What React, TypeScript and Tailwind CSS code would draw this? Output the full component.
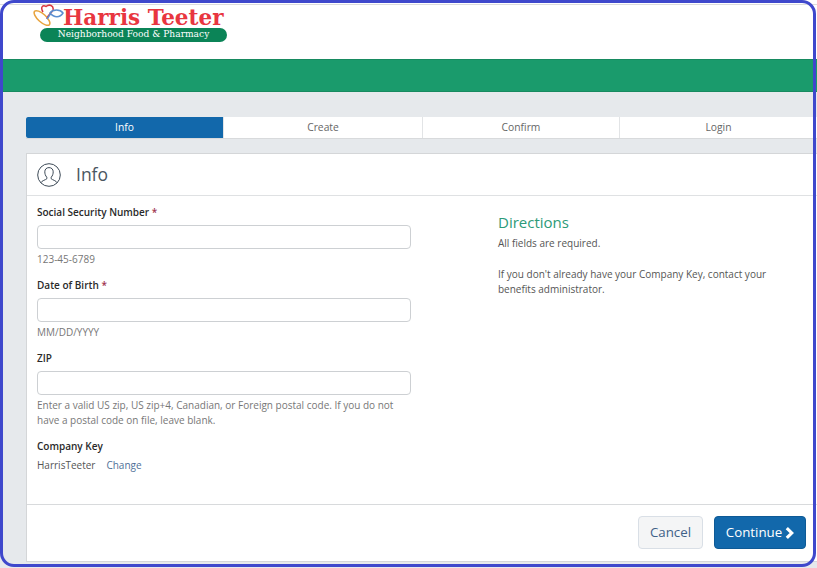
const Field = ({
  label,
  required,
  hint,
}: {
  label: string;
  required?: boolean;
  hint: string;
}) => (
  <div className="mb-[9px]">
    <div className="h-[19px] text-[10px] leading-[19px] font-semibold text-[#2a2a2a]">
      {label}
      {required && <span className="text-[#a0344f]"> *</span>}
    </div>
    <input
      type="text"
      className="mt-[3px] block h-[24px] w-[374px] rounded-[4px] border border-[#cdd0d3] bg-white"
    />
    <div className="mt-[3px] w-[374px] text-[10px] leading-[15px] text-[#777]">{hint}</div>
  </div>
);

const Logo = () => (
  <div className="relative ml-[32px] h-[59px] w-[200px]">
    <svg viewBox="0 0 34 24" className="absolute left-0 top-[4px] h-[24px] w-[34px]" fill="none">
      <ellipse cx="10" cy="14" rx="10" ry="4" transform="rotate(42 10 14)" stroke="#e8a33d" strokeWidth="1.500" />
      <path d="M11 8C8 3 11 0.500 14 2.500C17 0 22 1 21 6C20 9 16 10 15 15" stroke="#d9353f" strokeWidth="1.500" />
      <path d="M18 9C21 5 28 5 31 9C28 14 22 14 18 9ZM15 15L19 9" stroke="#5b8fd0" strokeWidth="1.500" />
    </svg>
    <div className="absolute left-[31px] top-[3px] whitespace-nowrap font-['DejaVu_Serif',serif] text-[21.500px] leading-[29px] font-bold text-[#e8363f]">
      Harris Teeter
    </div>
    <div className="absolute left-[8px] top-[28px] flex h-[14px] w-[187px] items-center justify-center rounded-[7px] bg-[#0b8457] font-['DejaVu_Serif',serif] text-[9.100px] whitespace-nowrap text-white">
      Neighborhood Food &amp; Pharmacy
    </div>
  </div>
);

const tabs = [
  { name: "Info", width: "w-[197px]", active: true },
  { name: "Create", width: "w-[199px]" },
  { name: "Confirm", width: "w-[197px]" },
  { name: "Login", width: "w-[198px]" },
];

export default function App() {
  return (
    <div className="relative h-[568px] w-[817px] overflow-hidden bg-white font-['Open_Sans',sans-serif]">
      <div className="flex h-full flex-col bg-[#e6e9ec] pl-[3px]">
        {/* Header */}
        <div className="relative -ml-[3px] h-[59px] shrink-0 bg-white">
          <div className="absolute top-[4px] right-0 left-0 border-t border-[#dcdcdc]" />
          <div className="relative">
            <Logo />
          </div>
        </div>
        <div className="-ml-[3px] h-[33px] shrink-0 border-y border-[#178a60] bg-[#1a9b6c]" />

        {/* Steps */}
        <div className="mt-[25px] ml-[23px] flex h-[22px] shrink-0 border-b border-[#d8dadc] bg-white">
          {tabs.map((tab) => (
            <div
              key={tab.name}
              className={
                tab.active
                  ? `${tab.width} flex shrink-0 items-center justify-center rounded-l-[2px] bg-[#1268ab] text-[10.300px] text-white`
                  : `${tab.width} flex shrink-0 items-center justify-center border-l border-[#e2e4e6] text-[10.300px] text-[#666]`
              }
            >
              {tab.name}
            </div>
          ))}
        </div>

        {/* Card */}
        <div className="mt-[14px] ml-[23px] flex h-[409px] shrink-0 flex-col border-t border-l border-b border-[#d4d6d8] bg-white">
          <div className="flex h-[42px] shrink-0 items-center border-b border-[#dfe1e3] pl-[10px]">
            <svg viewBox="0 0 24 24" className="h-[24px] w-[24px]" fill="none" stroke="#3d4a57" strokeWidth="1">
              <circle cx="12" cy="12" r="11.300" />
              <path d="M3.800 19.800C5 17.500 8.500 17 9.800 15.800V14.200C8.300 12.800 7.800 10.500 7.800 8.800C7.800 6.300 9.500 4.600 12 4.600C14.500 4.600 16.200 6.300 16.200 8.800C16.200 10.500 15.700 12.800 14.200 14.200V15.800C15.500 17 19 17.500 20.200 19.800" />
            </svg>
            <span className="ml-[15px] text-[17.500px] text-[#4a5661]">Info</span>
          </div>

          <div className="flex flex-1">
            <div className="w-[471px] shrink-0 pt-[7px] pl-[10px]">
              <Field label="Social Security Number" required hint="123-45-6789" />
              <Field label="Date of Birth" required hint="MM/DD/YYYY" />
              <Field
                label="ZIP"
                hint="Enter a valid US zip, US zip+4, Canadian, or Foreign postal code. If you do not have a postal code on file, leave blank."
              />
              <div className="h-[19px] text-[10px] leading-[19px] font-semibold text-[#2a2a2a]">Company Key</div>
              <div className="flex text-[10px] leading-[18px]">
                <span className="text-[#555]">HarrisTeeter</span>
                <span className="ml-[11px] text-[#4f7098]">Change</span>
              </div>
            </div>
            <div className="pt-[16px]">
              <div className="text-[15px] leading-[20px] text-[#2c9a78]">Directions</div>
              <div className="mt-[4px] text-[10px] leading-[15px] text-[#555]">All fields are required.</div>
              <div className="mt-[16px] w-[290px] text-[10px] leading-[15px] text-[#555]">
                If you don't already have your Company Key, contact your benefits administrator.
              </div>
            </div>
          </div>

          <div className="flex h-[57px] shrink-0 items-start justify-end gap-[11px] border-t border-[#d8dadc] pt-[11px] pr-[11px]">
            <button className="h-[33px] w-[65px] rounded-[4px] border border-[#d9dfe6] bg-[#f4f5f6] text-[13.300px] text-[#3f6188]">
              Cancel
            </button>
            <button className="flex h-[33px] w-[92px] items-center justify-center gap-[3px] rounded-[4px] border border-[#0e5a96] bg-[#1268ab] text-[13.300px] text-white">
              Continue
              <svg viewBox="0 0 10 14" className="h-[14px] w-[9px]" fill="none" stroke="white" strokeWidth="3.500">
                <path d="M2 1.500L7.500 7L2 12.500" />
              </svg>
            </button>
          </div>
        </div>
      </div>

      {/* Screenshot frame */}
      <div className="pointer-events-none absolute top-0 left-0 h-[567px] w-[816px] rounded-[14px] border-[3px] border-[#3f48cc]" />
    </div>
  );
}
